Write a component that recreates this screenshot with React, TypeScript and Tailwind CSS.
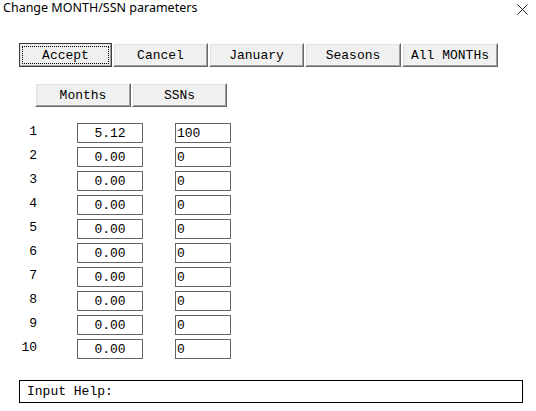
import React from "react";

function Btn({ label, w, focus = false }: { label: string; w: string; focus?: boolean }) {
  return (
    <div
      className={`${w} h-[24px] border border-t-white border-l-white border-r-[#696969] border-b-[#696969] ${focus ? "outline outline-1 outline-[#3c3c3c] -outline-offset-1" : ""}`}
    >
      <div className="h-full w-full border border-t-[#e3e3e3] border-l-[#e3e3e3] border-r-[#a0a0a0] border-b-[#a0a0a0] bg-[#f0f0f0] p-[1px]">
        <div
          className={`h-full w-full flex items-center justify-center ${focus ? "border border-dotted border-black" : ""}`}
        >
          <span className="text-[13px] leading-none text-black">{label}</span>
        </div>
      </div>
    </div>
  );
}

const months = ["5.12", "0.00", "0.00", "0.00", "0.00", "0.00", "0.00", "0.00", "0.00", "0.00"];
const ssns = ["100", "0", "0", "0", "0", "0", "0", "0", "0", "0"];

export default function App() {
  return (
    <div
      className="w-[536px] h-[411px] bg-white text-black overflow-hidden"
      style={{ fontFamily: '"Liberation Mono", "DejaVu Sans Mono", monospace' }}
    >
      <div className="h-[20px] flex items-start justify-between pl-[3px] pr-[8px] pt-[2px]">
        <span
          className="text-[12.5px] leading-none"
          style={{ fontFamily: '"Noto Sans", "Liberation Sans", sans-serif' }}
        >
          Change MONTH/SSN parameters
        </span>
        <svg width="11" height="11" viewBox="0 0 11 11" className="mt-[2px]">
          <path d="M0.5 0.5 L10.5 10.5 M10.5 0.5 L0.5 10.5" stroke="#222" strokeWidth="1" />
        </svg>
      </div>

      <div className="mt-[23px] ml-[19px] flex gap-[1px]">
        <Btn label="Accept" w="w-[93px]" focus />
        <Btn label="Cancel" w="w-[95px]" />
        <Btn label="January" w="w-[95px]" />
        <Btn label="Seasons" w="w-[96px]" />
        <Btn label="All MONTHs" w="w-[96px]" />
      </div>

      <div className="mt-[16px] ml-[35px] flex gap-[1px]">
        <Btn label="Months" w="w-[96px]" />
        <Btn label="SSNs" w="w-[95px]" />
      </div>

      <div className="mt-[16px] flex flex-col gap-[4px]">
        {months.map((m, i) => (
          <div key={i} className="flex items-start h-[20px]">
            <div className="w-[37px] text-right text-[13px] leading-none pt-[2px]">{i + 1}</div>
            <div className="ml-[40px] w-[66px] h-[20px] border border-[#646464] flex items-center justify-center text-[13px] leading-none pt-[1px]">
              {m}
            </div>
            <div className="ml-[32px] w-[56px] h-[20px] border border-[#646464] flex items-center pl-[1px] text-[13px] leading-none pt-[1px]">
              {ssns[i]}
            </div>
          </div>
        ))}
      </div>

      <div className="mt-[21px] ml-[19px] w-[504px] h-[23px] border border-black flex items-center pl-[7px] text-[13px] leading-none">
        Input Help:
      </div>
    </div>
  );
}
